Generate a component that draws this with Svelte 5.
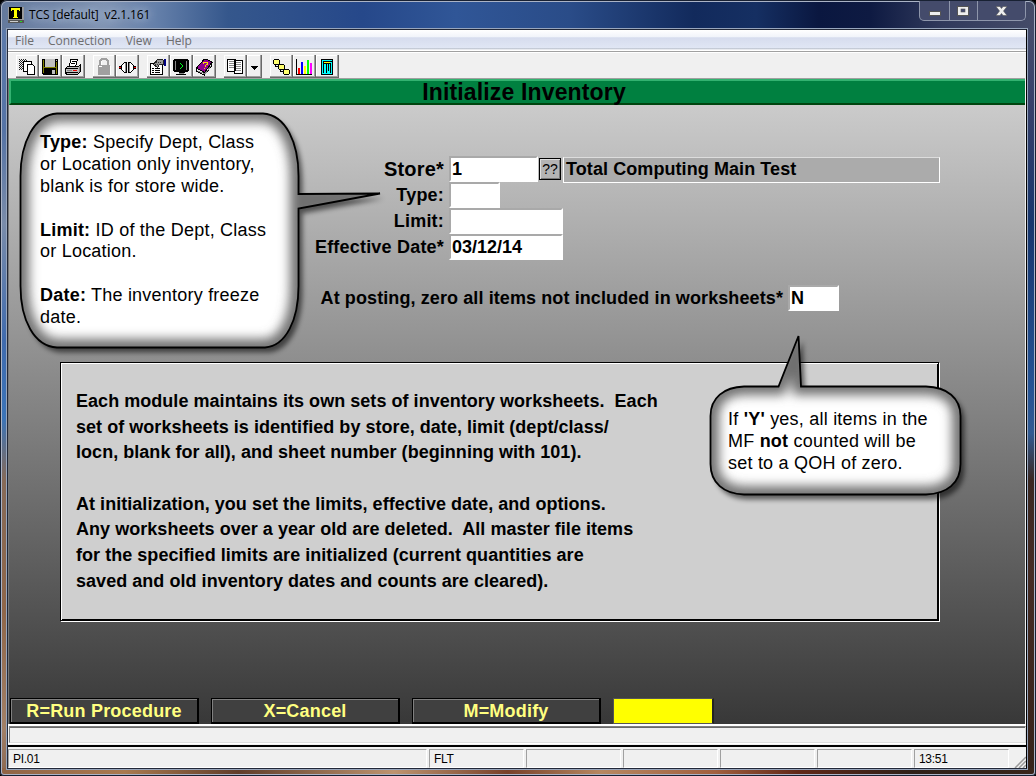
<script>
  const menus = ['File', 'Connection', 'View', 'Help'];
  const groups = [
    ['copy', 'save', 'print'],
    ['lock', 'connect'],
    ['props', 'monitor', 'book'],
    ['pages', 'drop'],
    ['nodes', 'chart', 'tower']
  ];
  const actions = ['R=Run Procedure', 'X=Cancel', 'M=Modify'];
  const intro = [
    'Each module maintains its own sets of inventory worksheets.  Each',
    'set of worksheets is identified by store, date, limit (dept/class/',
    'locn, blank for all), and sheet number (beginning with 101).',
    '',
    'At initialization, you set the limits, effective date, and options.',
    'Any worksheets over a year old are deleted.  All master file items',
    'for the specified limits are initialized (current quantities are',
    'saved and old inventory dates and counts are cleared).'
  ];
  const balloonA =
    'M57 113.5H263C286 115 298.5 143 298.5 176V194L380 193.5L298.5 208.5V286C298.5 320 286 346 265 347.5H57C34 346 20.5 320 20.5 286V176C20.5 143 34 115 57 113.5Z';
  const balloonB =
    'M744 386.5H778.5L798.5 336L801 386.5H926C947 387 960.5 398 960.5 416V464C960.5 483 947 494 926 494.5H744C724 494 710.5 483 710.5 464V416C710.5 398 724 387 744 386.5Z';
</script>

<div class="window">
  <header class="titlebar">
    <svg class="appicon" width="16" height="16" viewBox="0 0 16 16" shape-rendering="crispEdges">
      <path fill="#999" d="M0 0h16v14h-16z" /><path fill="#000" d="M1 0h13v12h-13z" />
      <path fill="#ff0" d="M3 1h9v3h-1v-1h-2v7h1v1H5v-1h1V3H4v1H3z" />
      <path fill="#555" d="M0 13h16v3H0z" /><path fill="#ccc" d="M2 14h8v1H2z" /><path fill="#2d2" d="M12 14h2v1h-2z" />
    </svg>
    <span class="caption">TCS [default]&nbsp; v2.1.161</span>
    <div class="controls">
      <span class="ctl"><svg width="29" height="18"><rect x="9.5" y="10.5" width="11" height="4" fill="#eee" stroke="#555" /></svg></span>
      <span class="ctl"><svg width="27" height="18"><rect x="7.5" y="5.5" width="11" height="9" fill="#eee" stroke="#555" /><rect x="11" y="8" width="4" height="3" fill="#444a70" stroke="#555" stroke-width=".6" /></svg></span>
      <span class="ctl"><svg width="47" height="18"><path d="M18 5.500h4l1.500 2 1.500-2h4l-3.500 4.500 3.500 4.500h-4l-1.500-2-1.500 2h-4l3.500-4.500z" fill="#eee" stroke="#555" stroke-width=".6" /></svg></span>
    </div>
  </header>

  <main class="client">
    <nav class="menubar">
      {#each menus as m}<span class="m-{m}">{m}</span>{/each}
    </nav>

    <div class="toolbar">
      {#each groups as group}
        <div class="group">
          {#each group as icon}
            <button class="tool {icon}" aria-label={icon}>
              <svg width={icon === 'drop' ? 15 : 22} height="22" shape-rendering="crispEdges">
                {#if icon === 'copy'}
                  <g stroke="#222" stroke-dasharray="1 1">
                    <path d="M3 3.500h8M3 5.500h8M3 7.500h8M3 9.500h5M3 11.500h5M3 13.500h4" />
                    <path d="M4 4.500h7M4 6.500h7M4 8.500h4M4 10.500h4M4 12.500h3" />
                  </g>
                  <path fill="#fff" stroke="#000" d="M7.500 5.500h8v10h-8z" />
                  <path fill="#fff" stroke="#000" d="M11.500 8.500h5l2 2v8h-7z" />
                {:else if icon === 'save'}
                  <path fill="#000" d="M3 3h16v16H4l-1-1z" /><path fill="#808000" d="M4 4h1v13H4zM17 6h1v12h-1zM5 11h12v1H5z" />
                  <path fill="#c0c0c0" d="M6 3h10v8H6zM17 4h1v1h-1zM13 14h3v4h-3z" />
                {:else if icon === 'print'}
                  <path fill="#fff" stroke="#000" d="M8.500 3.500h7l-2 7h-6z" /><path stroke="#000" d="M10 5.500h4M9 7.500h4" />
                  <path fill="#c0c0c0" stroke="#000" d="M5.500 10.500h11l2-2v7l-3 3h-11l-1-2v-4z" />
                  <path stroke="#000" d="M3 12.500h13M4 16.500h12" /><path stroke="#e00000" d="M11 14.500h4" /><path stroke="#808080" d="M5 14.500h5M17.500 11v5" />
                {:else if icon === 'lock'}
                  <path fill="none" stroke="#a0a0a0" stroke-width="2" d="M7 10V5l2-2h4l2 2v5" />
                  <path fill="#a0a0a0" d="M5 9h12v10H5z" /><path stroke="#fff" d="M17.500 10v9M8.500 5v4M6 10.500h3" />
                {:else if icon === 'connect'}
                  <path stroke="#000" stroke-width="3" d="M3 11.500h3M17 11.500h3" /><path stroke="#f00" d="M3 11.500h3M17 11.500h3" />
                  <path fill="#fff" stroke="#000" d="M8.500 6.500h2v10h-2l-3-3v-4zM12.500 6.500h2l3 3v4l-3 3h-2z" />
                  <path stroke="#909090" d="M9.500 7v9M13.500 7v9" />
                {:else if icon === 'props'}
                  <path fill="#fff" stroke="#000" d="M3.500 7.500h12v11h-12z" /><path stroke="#000" d="M5 12.500h2M8 12.500h5M5 14.500h2M8 14.500h5M5 16.500h2M8 16.500h5" />
                  <path fill="#999" stroke="#222" d="M6.500 8.500l4-5h5l1 1v4h-4l-2 3z" /><path fill="#000080" d="M17 3h2v7h-2z" /><path stroke="#333" stroke-dasharray="1 1" d="M8 8.500h6M9 6.500h6" />
                {:else if icon === 'monitor'}
                  <path fill="#888" stroke="#000" stroke-width="2" d="M5 4h12l1 1v9l-1 1H5l-1-1V5z" /><path fill="#000" d="M6 5h10v9H6z" />
                  <path fill="none" stroke="#00ff20" d="M10 7l3 3-3 3" /><path stroke="#000" d="M9 16.500h6M6 18.500h10" /><path stroke="#888" d="M9 17.500h5" />
                {:else if icon === 'book'}
                  <path fill="#90008f" stroke="#000" d="M3.500 12l8-9h2l6 3.500-8 10z" /><path fill="#eee" stroke="#000" d="M3.500 12v3.500l8 3.500 7-9V7l-7 9.500z" />
                  <path stroke="#888" d="M5 15l7 3 6-8" fill="none" /><path fill="none" stroke="#ffdf00" d="M10 7.500l1-1h3v2l-2 1.500v1M10.500 12.500h1" />
                {:else if icon === 'pages'}
                  <path fill="#fff" stroke="#000" d="M3.500 3.500h8v12h-8z" /><path fill="#fff" stroke="#000" d="M10.500 4.500h8v13h-8z" />
                  <path stroke="#000" d="M11.500 3v12M3 15.500h8" /><path stroke="#888" d="M5 5.500h5M5 7.500h5M5 9.500h5M5 11.500h5M12 6.500h5M12 8.500h5M12 10.500h5M12 12.500h5M12 14.500h5" />
                {:else if icon === 'drop'}
                  <path d="M4 10h7v1h-1v1H9v1H8v1H7v-1H6v-1H5v-1H4z" />
                {:else if icon === 'nodes'}
                  <path fill="none" stroke="#000" d="M5.500 8v2.500h5M10.500 13v2.500h4" />
                  <path fill="#ffff70" stroke="#000" d="M4.500 3.500h4l1 1v3l-1 1h-4l-1-1v-3zM9.500 8.500h4l1 1v3l-1 1h-4l-1-1v-3zM14.500 13.500h4l1 1v3l-1 1h-4l-1-1v-3z" />
                {:else if icon === 'chart'}
                  <path fill="none" stroke="#000" d="M3.500 3v15.500H19" /><path fill="#f00" d="M5 12h2v6H5z" /><path fill="#00f" d="M8 6h2v12H8z" />
                  <path fill="#ff0" d="M11 10h2v8h-2z" /><path fill="#0f0" d="M14 4h2v14h-2z" /><path fill="#f0f" d="M17 7h2v11h-2z" />
                {:else}
                  <path fill="#0ff" stroke="#000" d="M5.500 3.500h11v15h-11z" /><path stroke="#000" d="M7 5.500h9M7 7.500h8M7.500 6v11M10.500 8v9M12.500 8v7M14.500 8v9" /><path stroke="#ff0" d="M8 6.500h6" />
                {/if}
              </svg>
            </button>
          {/each}
        </div>
      {/each}
    </div>

    <section class="screen">
      <h1>Initialize Inventory</h1>

      <form class="form">
        <div class="row">
          <label class="big" for="store">Store*</label>
          <div class="field w89" id="store">1</div>
          <span class="lookup">??</span>
          <div class="lookup-name">Total Computing Main Test</div>
        </div>
        <div class="row"><span class="label">Type:</span><div class="field w51"></div></div>
        <div class="row"><span class="label">Limit:</span><div class="field w114"></div></div>
        <div class="row"><span class="label">Effective Date*</span><div class="field w114">03/12/14</div></div>
        <div class="row posting"><span class="label wide">At posting, zero all items not included in worksheets*</span><div class="field w51">N</div></div>
      </form>

      <div class="intro">
        {#each intro as line}<p>{line}</p>{/each}
      </div>

      <footer class="actions">
        {#each actions as a}<span class="action"><b>{a}</b></span>{/each}
        <span class="entry"></span>
      </footer>
    </section>

    <div class="message"><div></div></div>
    <div class="status">
      <span class="first">PI.01</span><span>FLT</span><span></span><span></span><span></span><span></span><span>13:51</span>
      <svg width="12" height="12"><path d="M1 12L12 1M5 12l7-7M9 12l3-3" stroke="#999" stroke-width="1.500" /></svg>
    </div>
  </main>

  <svg class="balloons" width="1036" height="776">
    <defs>
      <filter id="soft" x="-20%" y="-20%" width="140%" height="140%"><feGaussianBlur stdDeviation="5.500" /></filter>
      <filter id="cast" x="-20%" y="-20%" width="140%" height="140%"><feGaussianBlur stdDeviation="2.500" /></filter>
      <clipPath id="clip0"><path d={balloonA} /></clipPath>
      <clipPath id="clip1"><path d={balloonB} /></clipPath>
    </defs>
    {#each [balloonA, balloonB] as d, i}
      <path {d} fill="#000" opacity=".55" transform="translate(4 5)" filter="url(#cast)" />
      <path {d} fill="#fff" />
      <g clip-path="url(#clip{i})"><path {d} fill="none" stroke="#707070" stroke-width="17" filter="url(#soft)" /></g>
      <path {d} fill="none" stroke="#000" stroke-width="1.800" />
    {/each}
  </svg>
  <div class="note note-a">
    <p><b>Type:</b> Specify Dept, Class</p><p>or Location only inventory,</p><p>blank is for store wide.</p><p></p>
    <p><b>Limit:</b> ID of the Dept, Class</p><p>or Location.</p><p></p>
    <p><b>Date:</b> The inventory freeze</p><p>date.</p>
  </div>
  <div class="note note-b">
    <p>If <b>'Y'</b> yes, all items in the</p><p>MF <b>not</b> counted will be</p><p>set to a QOH of zero.</p>
  </div>
</div>

<style>
  :global(body) { margin: 0; background: #000; overflow: hidden; }
  * { box-sizing: border-box; }
  p { margin: 0; }
  .window {
    position: relative; width: 1036px; height: 776px; overflow: hidden; padding: 0 8px 7px 7px;
    display: flex; flex-direction: column; border-radius: 7px 7px 4px 4px;
    font-family: "Liberation Sans", sans-serif;
    box-shadow: inset 0 0 0 1px #182133, inset 0 0 0 2px #aab3c6;
    background:
      linear-gradient(90deg, #8f6446, #a97a50 12%, #603d2a 23%, #bd9470 38%, #77412a 49%, #b68862 58%, #a1603f 69%, #5f2818 77%, #2e2018 88%, #38251a) 0 100% / 100% 8px no-repeat,
      linear-gradient(180deg, #5c7aab 0, #5573a5 13%, #7a8caa 25%, #406bae 40%, #3b74b8 50%, #866a58 58%, #8f6649 75%, #a28067 90%, #7b5844) 0 30px / 8px 100% no-repeat,
      linear-gradient(180deg, #454d6c 0, #36406a 10%, #17366d 25%, #255394 46%, #315a91 52%, #3a2822 58%, #452c25 70%, #322118) 100% 30px / 10px 100% no-repeat,
      linear-gradient(90deg, #64799c 0, #8094b3 10%, #6580aa 15%, #35578c 22%, #26488a 35%, #305697 44%, #2a4c88 55%, #122a5c 67%, #152f62 73%, #0a1740 79%, #0e1a42 84%, #313a5c 91%, #454c69);
  }
  .titlebar { height: 29px; flex: none; display: flex; align-items: flex-start; }
  .appicon { margin: 7px 5px 0 1px; }
  .caption { font: 12px/17px "Open Sans", sans-serif; margin-top: 6px; letter-spacing: -.12px; color: #000; white-space: pre; text-shadow: 0 0 8px #c6d2e5, 0 0 10px #a9bad4; }
  .controls { margin: 1px 2px 0 auto; display: flex; border: 1px solid #8e96ab; border-top: 0; border-radius: 0 0 5px 5px; height: 20px; background: #444b6b; overflow: hidden; }
  .ctl + .ctl { border-left: 1px solid #8e96ab; }
  .ctl svg { display: block; }
  .client { flex: 1; display: flex; flex-direction: column; border: 1px solid #222838; border-right-color: #000; outline: 1px solid #98a6bd; background: #f0f0f0; min-height: 0; margin-right: 1px; }
  .menubar { height: 22px; flex: none; display: flex; align-items: center; padding-left: 7px; gap: 14px; background: linear-gradient(#fff 0, #f0f3fa 35%, #d6dcee 36%, #e0e6f4 85%, #b5bdcc 86%, #fff 96%); font: 12px/18px "Open Sans", sans-serif; color: #6d6d6d; border-bottom: 1px solid #a0a0a0; }
  .m-Connection { letter-spacing: -.02px; }
  .toolbar { height: 26px; flex: none; display: flex; gap: 8px; padding: 2px 0 0 8px; border-top: 1px solid #fff; }
  .group { display: flex; }
  .tool { width: 23px; height: 23px; padding: 0; background: #f0f0f0; border: 0; box-shadow: inset -1px -1px #696969, inset -2px -2px #a0a0a0, inset 1px 1px #fff; }
  .tool svg { display: block; }
  .tool.drop { width: 15px; }
  .screen { height: 646px; flex: none; border-top: 1px solid #a0a0a0; border-left: 1px solid #777; margin-right: 1px; padding-left: 1px; display: flex; flex-direction: column; background: linear-gradient(#cbcbcb 4%, #383838); }
  h1 { margin: 0 0 0 -1px; height: 26px; flex: none; background: #008040; border-top: 2px solid #33b270; border-bottom: 2px solid #00450f; border-left: 2px solid #33b270; text-align: center; font-size: 23px; line-height: 23px; letter-spacing: .15px; padding-left: 12px; }
  .form { margin-top: 51px; display: flex; flex-direction: column; font-weight: bold; font-size: 18px; }
  .row { height: 26px; display: flex; }
  .row label, .label { width: 434px; text-align: right; line-height: 26px; letter-spacing: .2px; }
  .row .big { font-size: 20px; }
  .field { margin-left: 5px; height: 26px; background: #fff; border: 2px solid #fff; border-top-color: #a9a9a9; border-left-color: #a9a9a9; line-height: 23px; padding-left: 1px; }
  .w89 { width: 89px; } .w51 { width: 51px; } .w114 { width: 114px; }
  .lookup { margin: 2px 2px 0 1px; width: 22px; height: 22px; border: 1px solid #000; box-shadow: inset 1px 1px #ddd, inset -1px -1px #777; background: #b4b4b4; font: 14px/21px "Liberation Sans", sans-serif; text-align: center; }
  .lookup-name { width: 377px; height: 26px; margin-top: 1px; border: 1px solid #fff; border-top-color: #ddd; background: #ababab; line-height: 23px; padding-left: 2px; letter-spacing: .08px; }
  .posting { margin-top: 25px; }
  .label.wide { width: 773px; letter-spacing: .1px; }
  .intro { margin: 51px 0 0 50px; width: 879px; height: 259px; background: #cfcfcf; border: 1px solid #000; box-shadow: inset 1px 1px #fff, inset -1px -1px #000, 1px 1px #fff; padding: 25px 15px; font-weight: bold; font-size: 18px; }
  .intro p { height: 25.700px; line-height: 26px; white-space: pre; letter-spacing: .04px; }
  .actions { margin-top: auto; height: 26px; display: flex; gap: 12px; }
  .action { width: 189px; height: 26px; border: 1px solid #000; border-right-width: 2px; border-bottom-width: 2px; background: #404040; box-shadow: inset 1px 1px #808080; color: #ffff80; text-align: center; font-size: 18px; line-height: 24px; letter-spacing: .2px; }
  .entry { width: 101px; background: #ff0; border: 1px solid #555; border-right: 2px solid #222; }
  .message { height: 20px; flex: none; border-top: 2px solid #fff; border-bottom: 1px solid #fff; }
  .message div { height: 17px; margin-left: 1px; border: 1px solid #808080; border-right-color: #ddd; border-bottom-color: #ddd; box-shadow: inset 0 1px #696969; }
  .status { height: 23px; margin-top: auto; border-top: 2px solid #000; display: flex; gap: 2px; align-items: flex-end; font-size: 12px; letter-spacing: -.3px; }
  .status span { width: 95px; height: 19px; border: 1px solid #a0a0a0; border-right-color: #fff; border-bottom-color: #fff; padding-left: 4px; line-height: 19px; white-space: pre; }
  .status .first { width: 419px; }
  .status svg { margin-left: auto; }
  .balloons { position: absolute; left: 0; top: 0; }
  .note { position: absolute; font-size: 18px; white-space: nowrap; line-height: 22px; color: #000; letter-spacing: .22px; }
  .note p { height: 21.900px; }
  .note-a { left: 40px; top: 131px; }
  .note-b { left: 728px; top: 408px; }
</style>
